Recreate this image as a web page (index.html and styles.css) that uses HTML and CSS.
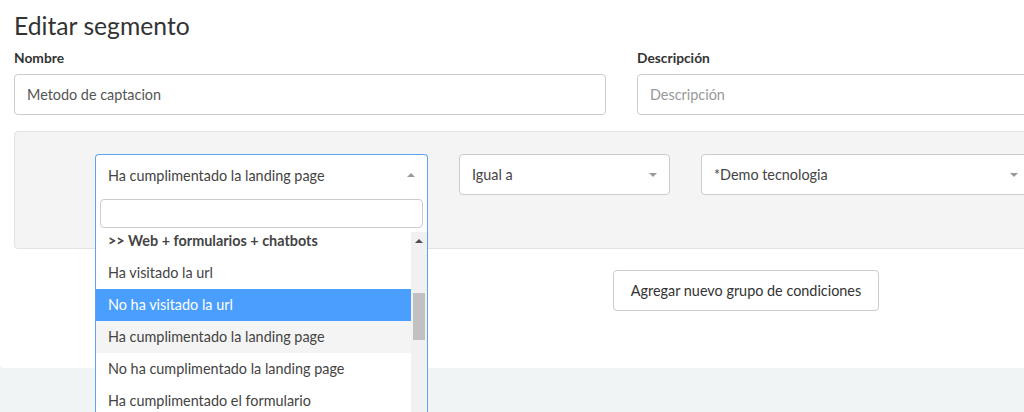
FILE: index.html
```html
<!DOCTYPE html>
<html lang="es">
<head>
<meta charset="utf-8">
<title>Editar segmento</title>
<link rel="stylesheet" href="styles.css">
</head>
<body>
<div class="page">
  <div class="card">
    <h1 class="title">Editar segmento</h1>
    <div class="fields">
      <div class="field">
        <label class="label">Nombre</label>
        <div class="input">Metodo de captacion</div>
      </div>
      <div class="field">
        <label class="label">Descripción</label>
        <div class="input placeholder">Descripción</div>
      </div>
    </div>
    <div class="panel">
      <div class="select open">
        <div class="select-value">
          <span>Ha cumplimentado la landing page</span>
          <span class="arrow up"></span>
        </div>
        <div class="dropdown">
          <div class="search-wrap"><div class="search"></div></div>
          <div class="results">
            <ul class="options">
              <li class="option group">&gt;&gt; Web + formularios + chatbots</li>
              <li class="option">Ha visitado la url</li>
              <li class="option highlighted">No ha visitado la url</li>
              <li class="option selected">Ha cumplimentado la landing page</li>
              <li class="option">No ha cumplimentado la landing page</li>
              <li class="option">Ha cumplimentado el formulario</li>
            </ul>
            <div class="scrollbar">
              <span class="sb-arrow"></span>
              <span class="sb-thumb"></span>
            </div>
          </div>
        </div>
      </div>
      <div class="select s2">
        <div class="select-value"><span>Igual a</span><span class="arrow"></span></div>
      </div>
      <div class="select s3">
        <div class="select-value"><span>*Demo tecnologia</span><span class="arrow"></span></div>
      </div>
    </div>
    <div class="actions">
      <button class="btn">Agregar nuevo grupo de condiciones</button>
    </div>
  </div>
  <div class="footer"></div>
</div>
</body>
</html>
```
FILE: styles.css
```css
* { box-sizing: border-box; }
html, body { margin: 0; padding: 0; overflow: hidden; }
body {
  width: 1024px;
  height: 412px;
  font-family: "Lato", "Noto Sans", sans-serif;
  color: #333;
  background: #f1f4f5;
}
.page { width: 1300px; }
.card {
  background: #fff;
  height: 368px;
  padding: 0 0 0 14px;
  border-bottom-left-radius: 4px;
}
.title {
  margin: 0;
  padding-top: 11px;
  font-size: 24.7px;
  font-weight: 400;
  line-height: 30px;
  color: #333;
  height: 47px;
}
.fields {
  display: flex;
  gap: 31px;
}
.field { width: 592px; }
.label {
  display: block;
  font-size: 13.8px;
  font-weight: 700;
  color: #333;
  line-height: 18px;
  height: 27px;
  padding-top: 2px;
}
.input {
  height: 41px;
  border: 1px solid #ccc;
  border-radius: 4px;
  padding: 0 12px;
  font-size: 14.4px;
  line-height: 39px;
  color: #555;
}
.input.placeholder { color: #999; }
.panel {
  margin-top: 16px;
  height: 118px;
  background: #f4f4f4;
  border: 1px solid #e3e3e3;
  border-radius: 4px;
  padding: 22px 0 0 80px;
  display: flex;
  gap: 31px;
  align-items: flex-start;
}
.select { position: relative; width: 333px; }
.select.s2 { width: 211px; }
.select.s3 { width: 330px; }
.select-value {
  height: 41px;
  background: #fff;
  border: 1px solid #ccc;
  border-radius: 4px;
  padding: 0 12px;
  display: flex;
  align-items: center;
  justify-content: space-between;
  font-size: 14.4px;
  color: #444;
}
.select.open .select-value {
  border-color: #5ba4f0;
  border-bottom: none;
  border-radius: 4px 4px 0 0;
}
.arrow {
  width: 0; height: 0;
  border-left: 4px solid transparent;
  border-right: 4px solid transparent;
  border-top: 4px solid #999;
}
.arrow.up {
  border-top: none;
  border-bottom: 4px solid #999;
}
.dropdown {
  position: absolute;
  left: 0;
  top: 41px;
  width: 333px;
  height: 240px;
  background: #fff;
  border: 1px solid #5ba4f0;
  border-top: none;
  z-index: 5;
}
.search-wrap { padding: 4px; }
.search {
  height: 29px;
  border: 1px solid #ccc;
  border-radius: 4px;
  background: #fff;
}
.results {
  display: flex;
  height: 200px;
  overflow: hidden;
}
.options {
  list-style: none;
  margin: -7px 0 0 0;
  padding: 0;
  flex: 1;
}
.option {
  height: 32px;
  line-height: 32px;
  padding: 0 12px;
  font-size: 14.4px;
  color: #444;
  white-space: nowrap;
}
.option.group { font-weight: 700; color: #444; }
.option.highlighted { background: #4a9efd; color: #fff; }
.option.selected { background: #f4f4f4; }
.scrollbar {
  width: 16px;
  background: #f1f1f1;
  display: flex;
  flex-direction: column;
  align-items: center;
}
.sb-arrow {
  margin-top: 7px;
  width: 0; height: 0;
  border-left: 4px solid transparent;
  border-right: 4px solid transparent;
  border-bottom: 4px solid #505050;
}
.sb-thumb {
  margin-top: 50px;
  width: 12px;
  height: 47px;
  background: #c1c1c1;
}
.actions {
  padding: 21px 0 0 599px;
}
.btn {
  height: 41px;
  width: 266px;
  background: #fff;
  border: 1px solid #ccc;
  border-radius: 4px;
  font-family: inherit;
  font-size: 14.4px;
  color: #333;
  padding: 0;
}
.footer {
  height: 44px;
  background: #f1f4f5;
}
```
